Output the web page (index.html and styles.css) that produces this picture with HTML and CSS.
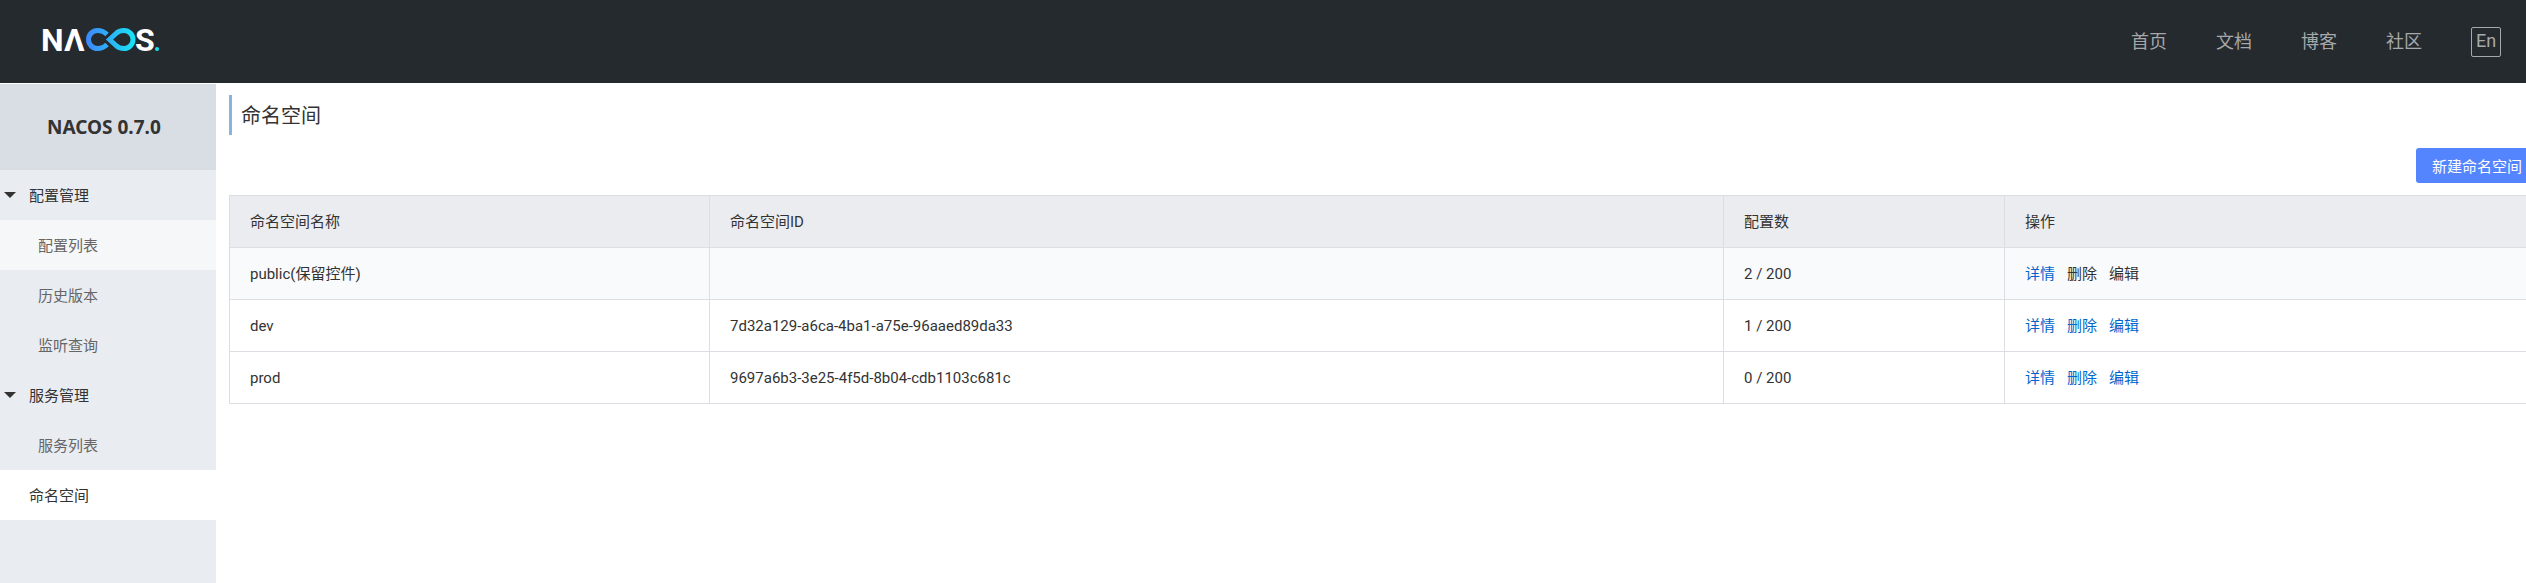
FILE: index.html
```html
<!DOCTYPE html>
<html lang="zh-CN">
<head>
<meta charset="utf-8">
<title>Nacos</title>
<link rel="stylesheet" href="styles.css">
</head>
<body>
<header class="header">
  <a class="logo" href="#" aria-label="Nacos">
    <svg width="126" height="42" viewBox="-4 -8 126 42">
      <defs>
        <linearGradient id="loop" gradientUnits="userSpaceOnUse" x1="43" y1="0" x2="92" y2="0">
          <stop offset="0" stop-color="#3f86fb"/>
          <stop offset="1" stop-color="#17e3f5"/>
        </linearGradient>
      </defs>
      <g class="logo-text">
        <text x="-2" y="25">N</text>
        <text x="21" y="25">Λ</text>
        <text x="92" y="25">S</text>
      </g>
      <g fill="none" stroke="url(#loop)" stroke-width="5">
        <path d="M64 8.500C61 5.500 58 4.500 54.500 4.500A9 9 0 0 0 54.500 22.500C58 22.500 61 21.500 64 18.500"/>
        <path d="M66.500 13.500L73 7.500C75 5.500 77.500 4.500 81 4.500A9 9 0 0 1 81 22.500C77.500 22.500 75 21.500 73 19.500Z"/>
      </g>
      <circle cx="114" cy="23" r="2" fill="#17e3f5"/>
    </svg>
  </a>
  <nav class="nav">
    <a href="#">首页</a>
    <a href="#">文档</a>
    <a href="#">博客</a>
    <a href="#">社区</a>
    <button class="lang" type="button">En</button>
  </nav>
</header>
<div class="body">
  <aside class="sidebar">
    <h1 class="product">NACOS 0.7.0</h1>
    <nav class="menu">
      <a class="item group" href="#"><span class="caret"></span>配置管理</a>
      <a class="item sub hover" href="#">配置列表</a>
      <a class="item sub" href="#">历史版本</a>
      <a class="item sub" href="#">监听查询</a>
      <a class="item group" href="#"><span class="caret"></span>服务管理</a>
      <a class="item sub" href="#">服务列表</a>
      <a class="item current" href="#">命名空间</a>
    </nav>
  </aside>
  <main class="main">
    <h2 class="title">命名空间</h2>
    <div class="toolbar"><button class="primary" type="button">新建命名空间</button></div>
    <table class="table">
      <colgroup><col class="col-name"><col><col class="col-count"><col class="col-actions"></colgroup>
      <thead>
        <tr><th>命名空间名称</th><th>命名空间ID</th><th>配置数</th><th>操作</th></tr>
      </thead>
      <tbody>
        <tr class="hover-row"><td>public(保留控件)</td><td></td><td>2 / 200</td><td><div class="actions"><a href="#">详情</a><span>删除</span><span>编辑</span></div></td></tr>
        <tr><td>dev</td><td>7d32a129-a6ca-4ba1-a75e-96aaed89da33</td><td>1 / 200</td><td><div class="actions"><a href="#">详情</a><a href="#">删除</a><a href="#">编辑</a></div></td></tr>
        <tr><td>prod</td><td>9697a6b3-3e25-4f5d-8b04-cdb1103c681c</td><td>0 / 200</td><td><div class="actions"><a href="#">详情</a><a href="#">删除</a><a href="#">编辑</a></div></td></tr>
      </tbody>
    </table>
  </main>
</div>
</body>
</html>
```
FILE: styles.css
```css
* {
  box-sizing: border-box;
}

body {
  margin: 0;
  min-height: 100vh;
  display: flex;
  flex-direction: column;
  overflow-x: hidden;
  background: #fff;
  color: #333;
  font: 15px/20px Roboto, "Noto Sans CJK SC", sans-serif;
}

a {
  color: inherit;
  text-decoration: none;
}

button {
  font-family: inherit;
  cursor: pointer;
}

.header {
  display: flex;
  align-items: center;
  justify-content: space-between;
  height: 83px;
  padding: 0 25px 0 39px;
  background: #252a2f;
}

.logo svg {
  display: block;
  margin-bottom: 5px;
}

.logo-text {
  fill: #fff;
  font: 700 32px Roboto, sans-serif;
}

.nav {
  display: flex;
  align-items: center;
  gap: 49px;
  color: #a6a8aa;
  font-size: 18px;
  line-height: 28px;
}

.lang {
  width: 30px;
  height: 30px;
  padding: 0 0 2px;
  border: 1px solid #a6a8aa;
  border-radius: 2px;
  background: none;
  color: inherit;
  font-size: 18px;
  line-height: 26px;
}

.body {
  display: flex;
  flex: 1;
  padding-top: 1px;
}

.sidebar {
  flex: none;
  width: 216px;
  background: #e9edf2;
}

.product {
  margin: 0;
  padding-left: 47px;
  background: #d9dde4;
  font-family: "Noto Sans", sans-serif;
  font-size: 19px;
  font-weight: 700;
  line-height: 86px;
}

.item {
  display: flex;
  align-items: center;
  height: 50px;
  padding: 1px 0 0 29px;
}

.group {
  gap: 13px;
  padding-left: 4px;
}

.caret {
  margin-bottom: 2px;
  border: 6px solid transparent;
  border-top-color: #333;
  border-bottom: 0;
}

.sub {
  padding-left: 38px;
  color: #666;
}

.hover {
  background: #f5f7f9;
}

.current {
  background: #fff;
}

.main {
  flex: 1;
  min-width: 0;
  margin-right: -12px;
  padding: 11px 0 0 13px;
}

.title {
  margin: 0;
  padding: 2px 0 0 9px;
  border-left: 3px solid #87b5df;
  font-size: 20px;
  font-weight: 400;
  line-height: 38px;
}

.toolbar {
  display: flex;
  justify-content: flex-end;
  padding: 13px 0 12px;
}

.primary {
  height: 35px;
  padding: 0 16px;
  border: 0;
  border-radius: 3px;
  background: #5584ff;
  color: #fff;
  font-size: 15px;
}

.table {
  width: 100%;
  table-layout: fixed;
  border-collapse: collapse;
}

.table th,
.table td {
  height: 52px;
  padding: 0 20px;
  border: 1px solid #dcdee3;
  font-weight: 400;
  text-align: left;
}

.table th {
  background: #ebecf0;
}

.col-name {
  width: 480px;
}

.col-count {
  width: 281px;
}

.col-actions {
  width: 533px;
}

.hover-row {
  background: #f9fafc;
}

.actions {
  display: flex;
  gap: 12px;
}

.actions a {
  color: #06c;
}
```
